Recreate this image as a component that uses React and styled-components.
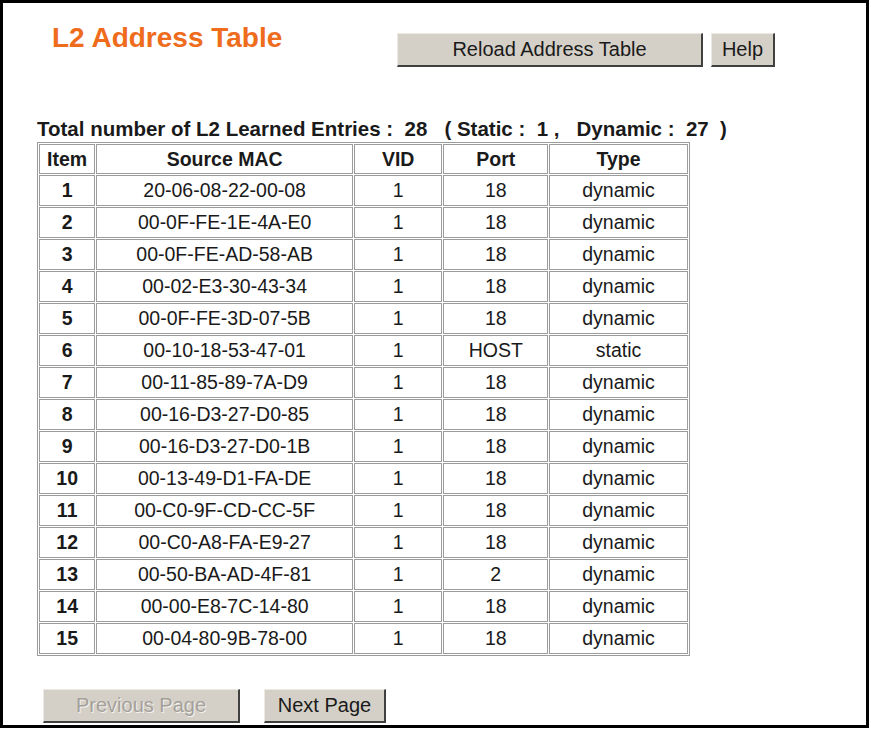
import styled, { createGlobalStyle } from 'styled-components';

const GlobalStyle = createGlobalStyle`
  html, body {
    margin: 0;
    padding: 0;
    background: #fff;
  }
  body {
    font-family: "Liberation Sans", Arial, sans-serif;
    color: #1a1a1a;
  }
`;

const StyledFrame = styled.div`
  width: 869px;
  height: 728px;
  box-sizing: border-box;
  border: 3px solid #000;
  padding: 0 0 0 34px;
  display: flex;
  flex-direction: column;
  background: #fff;
  overflow: hidden;
`;

const StyledTopBar = styled.div`
  display: flex;
  align-items: flex-start;
  padding-top: 19px;
`;

const StyledTitle = styled.h1`
  width: 345px;
  margin: 0 0 0 15px;
  font-size: 28px;
  font-weight: bold;
  color: #ee6c1c;
  line-height: 32px;
`;

const StyledButtonGroup = styled.div`
  display: flex;
  gap: 8px;
  margin-top: 11px;
`;

// 윈도우 클래식 느낌의 회색 버튼
const StyledButton = styled.button`
  width: ${(p) => p.$w}px;
  height: 34px;
  padding: 0;
  font-family: "Liberation Sans", Arial, sans-serif;
  font-size: 20px;
  color: ${(p) => (p.disabled ? '#a4a09a' : '#1a1a1a')};
  text-shadow: ${(p) => (p.disabled ? '1px 1px 0 #f4f2ee' : 'none')};
  background: #d4d0c8;
  border-style: solid;
  border-width: 1px 2px 2px 1px;
  border-color: #ece9e4 #404040 #404040 #ece9e4;
  cursor: default;
`;

const StyledSummary = styled.p`
  margin: 50px 0 0 0;
  font-size: 20.5px;
  font-weight: bold;
  line-height: 24px;
  white-space: pre;
`;

const StyledTable = styled.table`
  margin-top: 1px;
  border-collapse: separate;
  border-spacing: 1px;
  border: 1px solid #9c9c9c;
  width: 653px;
`;

const StyledCell = styled.td`
  border: 1px solid #9c9c9c;
  height: 29px;
  padding: 0;
  text-align: center;
  font-size: 19.5px;
  font-weight: ${(p) => (p.$bold ? 'bold' : 'normal')};
  color: #1a1a1a;
  width: ${(p) => (p.$w ? `${p.$w}px` : 'auto')};
`;

const StyledHeadCell = styled(StyledCell).attrs({ as: 'th' })`
  font-weight: bold;
  height: 28px;
`;

const StyledFooter = styled.div`
  display: flex;
  gap: 24px;
  margin-top: auto;
  margin-bottom: 2px;
  padding-left: 6px;
`;

const columns = [
  { label: 'Item', w: 54 },
  { label: 'Source MAC', w: 253 },
  { label: 'VID', w: 86 },
  { label: 'Port', w: 102 },
  { label: 'Type', w: 136 },
];

const entries = [
  ['20-06-08-22-00-08', '1', '18', 'dynamic'],
  ['00-0F-FE-1E-4A-E0', '1', '18', 'dynamic'],
  ['00-0F-FE-AD-58-AB', '1', '18', 'dynamic'],
  ['00-02-E3-30-43-34', '1', '18', 'dynamic'],
  ['00-0F-FE-3D-07-5B', '1', '18', 'dynamic'],
  ['00-10-18-53-47-01', '1', 'HOST', 'static'],
  ['00-11-85-89-7A-D9', '1', '18', 'dynamic'],
  ['00-16-D3-27-D0-85', '1', '18', 'dynamic'],
  ['00-16-D3-27-D0-1B', '1', '18', 'dynamic'],
  ['00-13-49-D1-FA-DE', '1', '18', 'dynamic'],
  ['00-C0-9F-CD-CC-5F', '1', '18', 'dynamic'],
  ['00-C0-A8-FA-E9-27', '1', '18', 'dynamic'],
  ['00-50-BA-AD-4F-81', '1', '2', 'dynamic'],
  ['00-00-E8-7C-14-80', '1', '18', 'dynamic'],
  ['00-04-80-9B-78-00', '1', '18', 'dynamic'],
];

export default function App() {
  return (
    <>
      <GlobalStyle />
      <StyledFrame>
        <StyledTopBar>
          <StyledTitle>L2 Address Table</StyledTitle>
          <StyledButtonGroup>
            <StyledButton $w={306}>Reload Address Table</StyledButton>
            <StyledButton $w={64}>Help</StyledButton>
          </StyledButtonGroup>
        </StyledTopBar>

        <StyledSummary>
          {'Total number of L2 Learned Entries :  28   ( Static :  1 ,   Dynamic :  27  )'}
        </StyledSummary>

        <StyledTable>
          <thead>
            <tr>
              {columns.map((col) => (
                <StyledHeadCell key={col.label} $w={col.w}>
                  {col.label}
                </StyledHeadCell>
              ))}
            </tr>
          </thead>
          <tbody>
            {entries.map((row, index) => (
              <tr key={index}>
                <StyledCell $bold>{index + 1}</StyledCell>
                {row.map((value, i) => (
                  <StyledCell key={i}>{value}</StyledCell>
                ))}
              </tr>
            ))}
          </tbody>
        </StyledTable>

        <StyledFooter>
          <StyledButton $w={197} disabled>
            Previous Page
          </StyledButton>
          <StyledButton $w={122}>Next Page</StyledButton>
        </StyledFooter>
      </StyledFrame>
    </>
  );
}
